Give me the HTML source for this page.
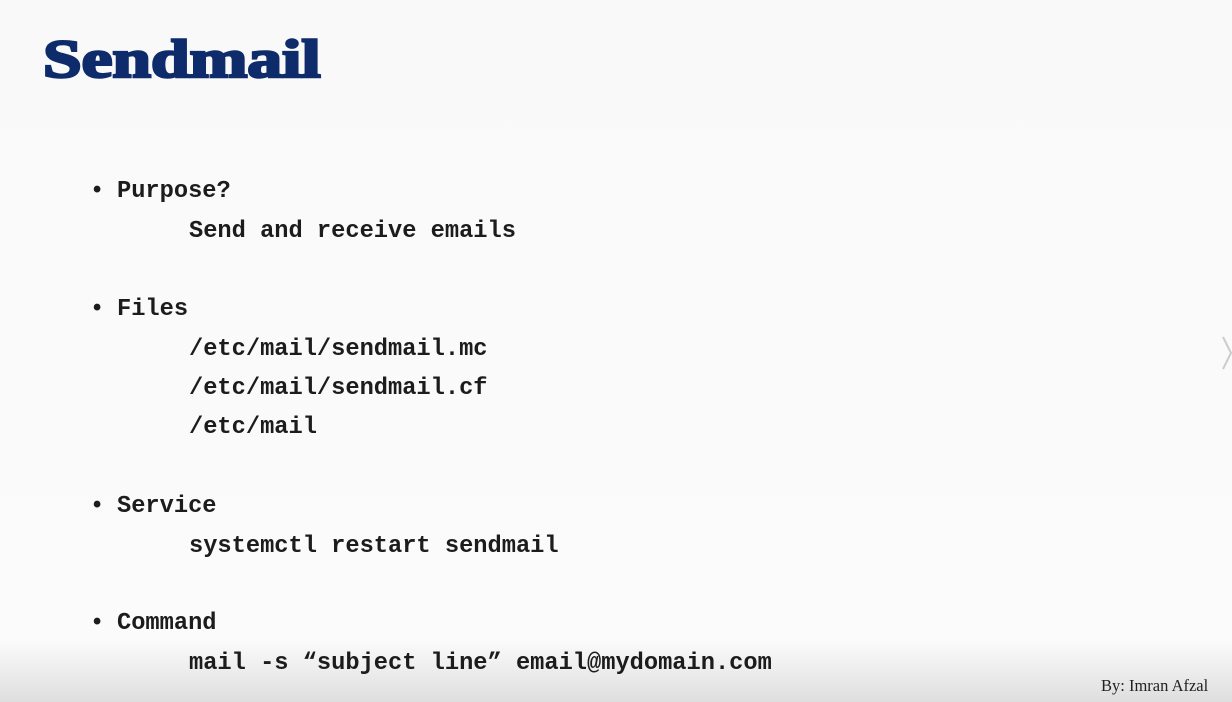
<!DOCTYPE html>
<html><head><meta charset="utf-8"><style>
html,body{margin:0;padding:0}
body{width:1232px;height:702px;position:relative;overflow:hidden;background:linear-gradient(#f9f9f9 0,#fbfbfb 640px,#e4e4e4 690px,#dedede 702px);font-family:"Liberation Mono",monospace;}
.t{position:absolute;left:43px;top:24px;font-family:"Liberation Serif",serif;font-weight:900;font-size:54px;color:#0e2b6b;letter-spacing:0px;transform:scaleX(1.285);transform-origin:left top;-webkit-text-stroke:2.5px #0e2b6b;line-height:70px}
.l{position:absolute;font-weight:bold;font-size:23.7px;line-height:28px;color:#1c1c1c;white-space:pre}
.b{left:90px}.i1{left:117px}.i2{left:189px}
.by{position:absolute;left:1101px;top:676px;font-family:"Liberation Serif",serif;font-size:16.5px;color:#222}
.ar{position:absolute;left:1222px;top:336px}
</style></head><body>
<div class="t">Sendmail</div>
<div class="l b" style="top:178px">•</div><div class="l i1" style="top:178px">Purpose?</div>
<div class="l i2" style="top:218px">Send and receive emails</div>
<div class="l b" style="top:296px">•</div><div class="l i1" style="top:296px">Files</div>
<div class="l i2" style="top:336px">/etc/mail/sendmail.mc</div>
<div class="l i2" style="top:375px">/etc/mail/sendmail.cf</div>
<div class="l i2" style="top:414px">/etc/mail</div>
<div class="l b" style="top:493px">•</div><div class="l i1" style="top:493px">Service</div>
<div class="l i2" style="top:533px">systemctl restart sendmail</div>
<div class="l b" style="top:610px">•</div><div class="l i1" style="top:610px">Command</div>
<div class="l i2" style="top:650px">mail -s “subject line” email@mydomain.com</div>
<div class="by">By: Imran Afzal</div>
<svg class="ar" width="10" height="34"><path d="M1 1 L9 17 L1 33" stroke="#ccc" stroke-width="2" fill="none"/></svg>
</body></html>
